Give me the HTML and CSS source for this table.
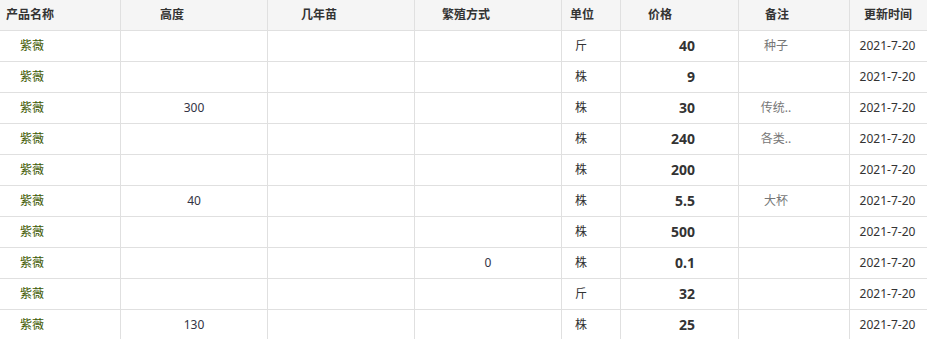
FILE: index.html
```html
<!DOCTYPE html>
<html lang="zh-CN">
<head>
<meta charset="utf-8">
<title>产品价格</title>
<link rel="stylesheet" href="styles.css">
</head>
<body>
<table class="price-table">
  <colgroup>
    <col class="w-name"><col class="w-height"><col class="w-year"><col class="w-breed">
    <col class="w-unit"><col class="w-price"><col class="w-note"><col class="w-date">
  </colgroup>
  <thead>
    <tr>
      <th class="h-name">产品名称</th>
      <th class="h-height">高度</th>
      <th class="h-year">几年苗</th>
      <th class="h-breed">繁殖方式</th>
      <th class="h-unit">单位</th>
      <th class="h-price">价格</th>
      <th class="h-note">备注</th>
      <th class="h-date">更新时间</th>
    </tr>
  </thead>
  <tbody>
    <tr><td class="c-name">紫薇</td><td class="c-mid"></td><td class="c-mid"></td><td class="c-mid"></td><td class="c-unit">斤</td><td class="c-price">40</td><td class="c-note">种子</td><td class="c-date">2021-7-20</td></tr>
    <tr><td class="c-name">紫薇</td><td class="c-mid"></td><td class="c-mid"></td><td class="c-mid"></td><td class="c-unit">株</td><td class="c-price">9</td><td class="c-note"></td><td class="c-date">2021-7-20</td></tr>
    <tr><td class="c-name">紫薇</td><td class="c-mid">300</td><td class="c-mid"></td><td class="c-mid"></td><td class="c-unit">株</td><td class="c-price">30</td><td class="c-note">传统..</td><td class="c-date">2021-7-20</td></tr>
    <tr><td class="c-name">紫薇</td><td class="c-mid"></td><td class="c-mid"></td><td class="c-mid"></td><td class="c-unit">株</td><td class="c-price">240</td><td class="c-note">各类..</td><td class="c-date">2021-7-20</td></tr>
    <tr><td class="c-name">紫薇</td><td class="c-mid"></td><td class="c-mid"></td><td class="c-mid"></td><td class="c-unit">株</td><td class="c-price">200</td><td class="c-note"></td><td class="c-date">2021-7-20</td></tr>
    <tr><td class="c-name">紫薇</td><td class="c-mid">40</td><td class="c-mid"></td><td class="c-mid"></td><td class="c-unit">株</td><td class="c-price">5.5</td><td class="c-note">大杯</td><td class="c-date">2021-7-20</td></tr>
    <tr><td class="c-name">紫薇</td><td class="c-mid"></td><td class="c-mid"></td><td class="c-mid"></td><td class="c-unit">株</td><td class="c-price">500</td><td class="c-note"></td><td class="c-date">2021-7-20</td></tr>
    <tr><td class="c-name">紫薇</td><td class="c-mid"></td><td class="c-mid"></td><td class="c-mid">0</td><td class="c-unit">株</td><td class="c-price">0.1</td><td class="c-note"></td><td class="c-date">2021-7-20</td></tr>
    <tr><td class="c-name">紫薇</td><td class="c-mid"></td><td class="c-mid"></td><td class="c-mid"></td><td class="c-unit">斤</td><td class="c-price">32</td><td class="c-note"></td><td class="c-date">2021-7-20</td></tr>
    <tr><td class="c-name">紫薇</td><td class="c-mid">130</td><td class="c-mid"></td><td class="c-mid"></td><td class="c-unit">株</td><td class="c-price">25</td><td class="c-note"></td><td class="c-date">2021-7-20</td></tr>
  </tbody>
</table>
</body>
</html>
```

FILE: styles.css
```css
html, body {
  margin: 0;
  padding: 0;
  background: #ffffff;
}

body {
  font-family: "Noto Sans", "Noto Sans CJK SC", sans-serif;
  font-size: 12px;
  color: #333333;
}

.price-table {
  width: 927px;
  table-layout: fixed;
  border-collapse: separate;
  border-spacing: 0;
}

.w-name { width: 121px; }
.w-height { width: 147px; }
.w-year { width: 147px; }
.w-breed { width: 147px; }
.w-unit { width: 59px; }
.w-price { width: 118px; }
.w-note { width: 111px; }
.w-date { width: 77px; }

.price-table th,
.price-table td {
  box-sizing: border-box;
  padding: 0;
  border-right: 1px solid #e0e0e0;
  border-bottom: 1px solid #e0e0e0;
  vertical-align: middle;
  white-space: nowrap;
  overflow: hidden;
  line-height: 16px;
}

.price-table th:last-child,
.price-table td:last-child {
  border-right: none;
}

.price-table thead tr {
  height: 31px;
}

.price-table th {
  background: #f5f5f5;
  font-weight: bold;
  color: #333333;
  text-align: left;
  padding-bottom: 1px;
}

.h-name { padding-left: 6px !important; }
.h-height { padding-left: 39px !important; }
.h-year { padding-left: 33px !important; }
.h-breed { padding-left: 27px !important; }
.h-unit { padding-left: 8px !important; }
.h-price { padding-left: 27px !important; }
.h-note { padding-left: 26px !important; }
.h-date { padding-left: 14px !important; }

.price-table tbody tr {
  height: 31px;
}

.c-name {
  padding-left: 20px !important;
  color: #3c5800;
}

.c-mid {
  text-align: center;
  color: #333344;
}

.c-unit {
  padding-left: 13px !important;
  color: #333333;
}

.c-price {
  text-align: right;
  padding-right: 43px !important;
  font-weight: bold;
  font-size: 14px;
  color: #333333;
}

.c-note {
  text-align: center;
  padding-right: 36px !important;
  color: #777777;
}

.c-date {
  text-align: center;
  padding-right: 2px !important;
  color: #333333;
}
```
